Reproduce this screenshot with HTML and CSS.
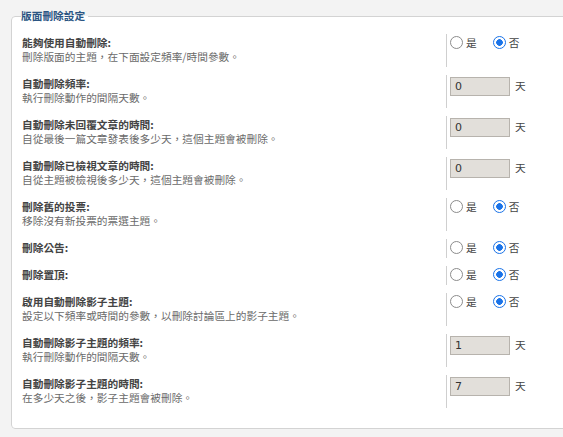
FILE: index.html
```html
<!DOCTYPE html>
<html lang="zh-Hant">
<head>
<meta charset="utf-8">
<title>版面刪除設定</title>
<link rel="stylesheet" href="styles.css">
</head>
<body>
<form class="page">
  <fieldset class="panel">
    <legend class="panel-title">版面刪除設定</legend>

    <dl class="opt">
      <dt><label class="opt-name">能夠使用自動刪除:</label><span class="opt-desc">刪除版面的主題，在下面設定頻率/時間參數。</span></dt>
      <dd>
        <label class="choice"><input type="radio" name="enable_prune" value="1"><span>是</span></label>
        <label class="choice"><input type="radio" name="enable_prune" value="0" checked><span>否</span></label>
      </dd>
    </dl>

    <dl class="opt">
      <dt><label class="opt-name">自動刪除頻率:</label><span class="opt-desc">執行刪除動作的間隔天數。</span></dt>
      <dd><input class="num" type="text" value="0"><span class="unit">天</span></dd>
    </dl>

    <dl class="opt">
      <dt><label class="opt-name">自動刪除未回覆文章的時間:</label><span class="opt-desc">自從最後一篇文章發表後多少天，這個主題會被刪除。</span></dt>
      <dd><input class="num" type="text" value="0"><span class="unit">天</span></dd>
    </dl>

    <dl class="opt">
      <dt><label class="opt-name">自動刪除已檢視文章的時間:</label><span class="opt-desc">自從主題被檢視後多少天，這個主題會被刪除。</span></dt>
      <dd><input class="num" type="text" value="0"><span class="unit">天</span></dd>
    </dl>

    <dl class="opt">
      <dt><label class="opt-name">刪除舊的投票:</label><span class="opt-desc">移除沒有新投票的票選主題。</span></dt>
      <dd>
        <label class="choice"><input type="radio" name="prune_old_polls" value="1"><span>是</span></label>
        <label class="choice"><input type="radio" name="prune_old_polls" value="0" checked><span>否</span></label>
      </dd>
    </dl>

    <dl class="opt">
      <dt><label class="opt-name">刪除公告:</label></dt>
      <dd>
        <label class="choice"><input type="radio" name="prune_announce" value="1"><span>是</span></label>
        <label class="choice"><input type="radio" name="prune_announce" value="0" checked><span>否</span></label>
      </dd>
    </dl>

    <dl class="opt">
      <dt><label class="opt-name">刪除置頂:</label></dt>
      <dd>
        <label class="choice"><input type="radio" name="prune_sticky" value="1"><span>是</span></label>
        <label class="choice"><input type="radio" name="prune_sticky" value="0" checked><span>否</span></label>
      </dd>
    </dl>

    <dl class="opt">
      <dt><label class="opt-name">啟用自動刪除影子主題:</label><span class="opt-desc">設定以下頻率或時間的參數，以刪除討論區上的影子主題。</span></dt>
      <dd>
        <label class="choice"><input type="radio" name="enable_shadow_prune" value="1"><span>是</span></label>
        <label class="choice"><input type="radio" name="enable_shadow_prune" value="0" checked><span>否</span></label>
      </dd>
    </dl>

    <dl class="opt">
      <dt><label class="opt-name">自動刪除影子主題的頻率:</label><span class="opt-desc">執行刪除動作的間隔天數。</span></dt>
      <dd><input class="num" type="text" value="1"><span class="unit">天</span></dd>
    </dl>

    <dl class="opt">
      <dt><label class="opt-name">自動刪除影子主題的時間:</label><span class="opt-desc">在多少天之後，影子主題會被刪除。</span></dt>
      <dd><input class="num" type="text" value="7"><span class="unit">天</span></dd>
    </dl>
  </fieldset>
</form>
</body>
</html>
```

FILE: styles.css
```css
html, body {
  margin: 0;
  padding: 0;
  overflow: hidden;
  background: #f3f3f3;
}

body {
  font-family: "Noto Sans CJK TC", "Noto Sans", sans-serif;
  font-size: 10.7px;
  line-height: 14px;
  color: #333;
}

.page {
  padding: 9px 0 0 11px;
}

.panel {
  width: 620px;
  margin: 0;
  padding: 11px 0 12px 10px;
  background: #fff;
  border: 1px solid #d3d3d3;
  border-radius: 4px;
}

.panel-title {
  padding: 0 3px 0 0;
  margin-left: -1px;
  font-weight: bold;
  color: #2b5583;
  line-height: 14px;
}

.opt {
  display: flex;
  margin: 0 0 8px;
}

.opt dt {
  width: 424px;
  flex: none;
  margin: 0;
  padding: 2px 0 3px;
}

.opt-name {
  display: block;
  font-weight: bold;
  color: #444;
}

.opt-desc {
  display: block;
  color: #6a6a6a;
}

.opt dd {
  display: flex;
  align-items: flex-start;
  margin: 0;
  padding: 2px 0 0 3px;
  border-left: 1px solid #cfcfcf;
}

.choice {
  display: inline-flex;
  align-items: center;
  height: 13px;
  margin-right: 16px;
  color: #444;
}

/* round option buttons */
.choice input {
  appearance: none;
  -webkit-appearance: none;
  box-sizing: border-box;
  width: 13px;
  height: 13px;
  margin: 0 3px 0 0;
  border: 1px solid #8c8c8c;
  border-radius: 50%;
  background: #fff;
}

.choice input:checked {
  border: 1.5px solid #1a73e8;
  background: radial-gradient(circle, #1a73e8 0 3px, #fff 3.6px);
}

.num {
  box-sizing: border-box;
  width: 60px;
  height: 19px;
  margin: 0;
  padding: 0 4px;
  font-family: "DejaVu Sans", sans-serif;
  font-size: 11px;
  color: #333;
  background: #e2dfda;
  border: 1px solid #b7b3ad;
  border-radius: 0;
}

.unit {
  margin-left: 5px;
  line-height: 17px;
  color: #444;
}
```
